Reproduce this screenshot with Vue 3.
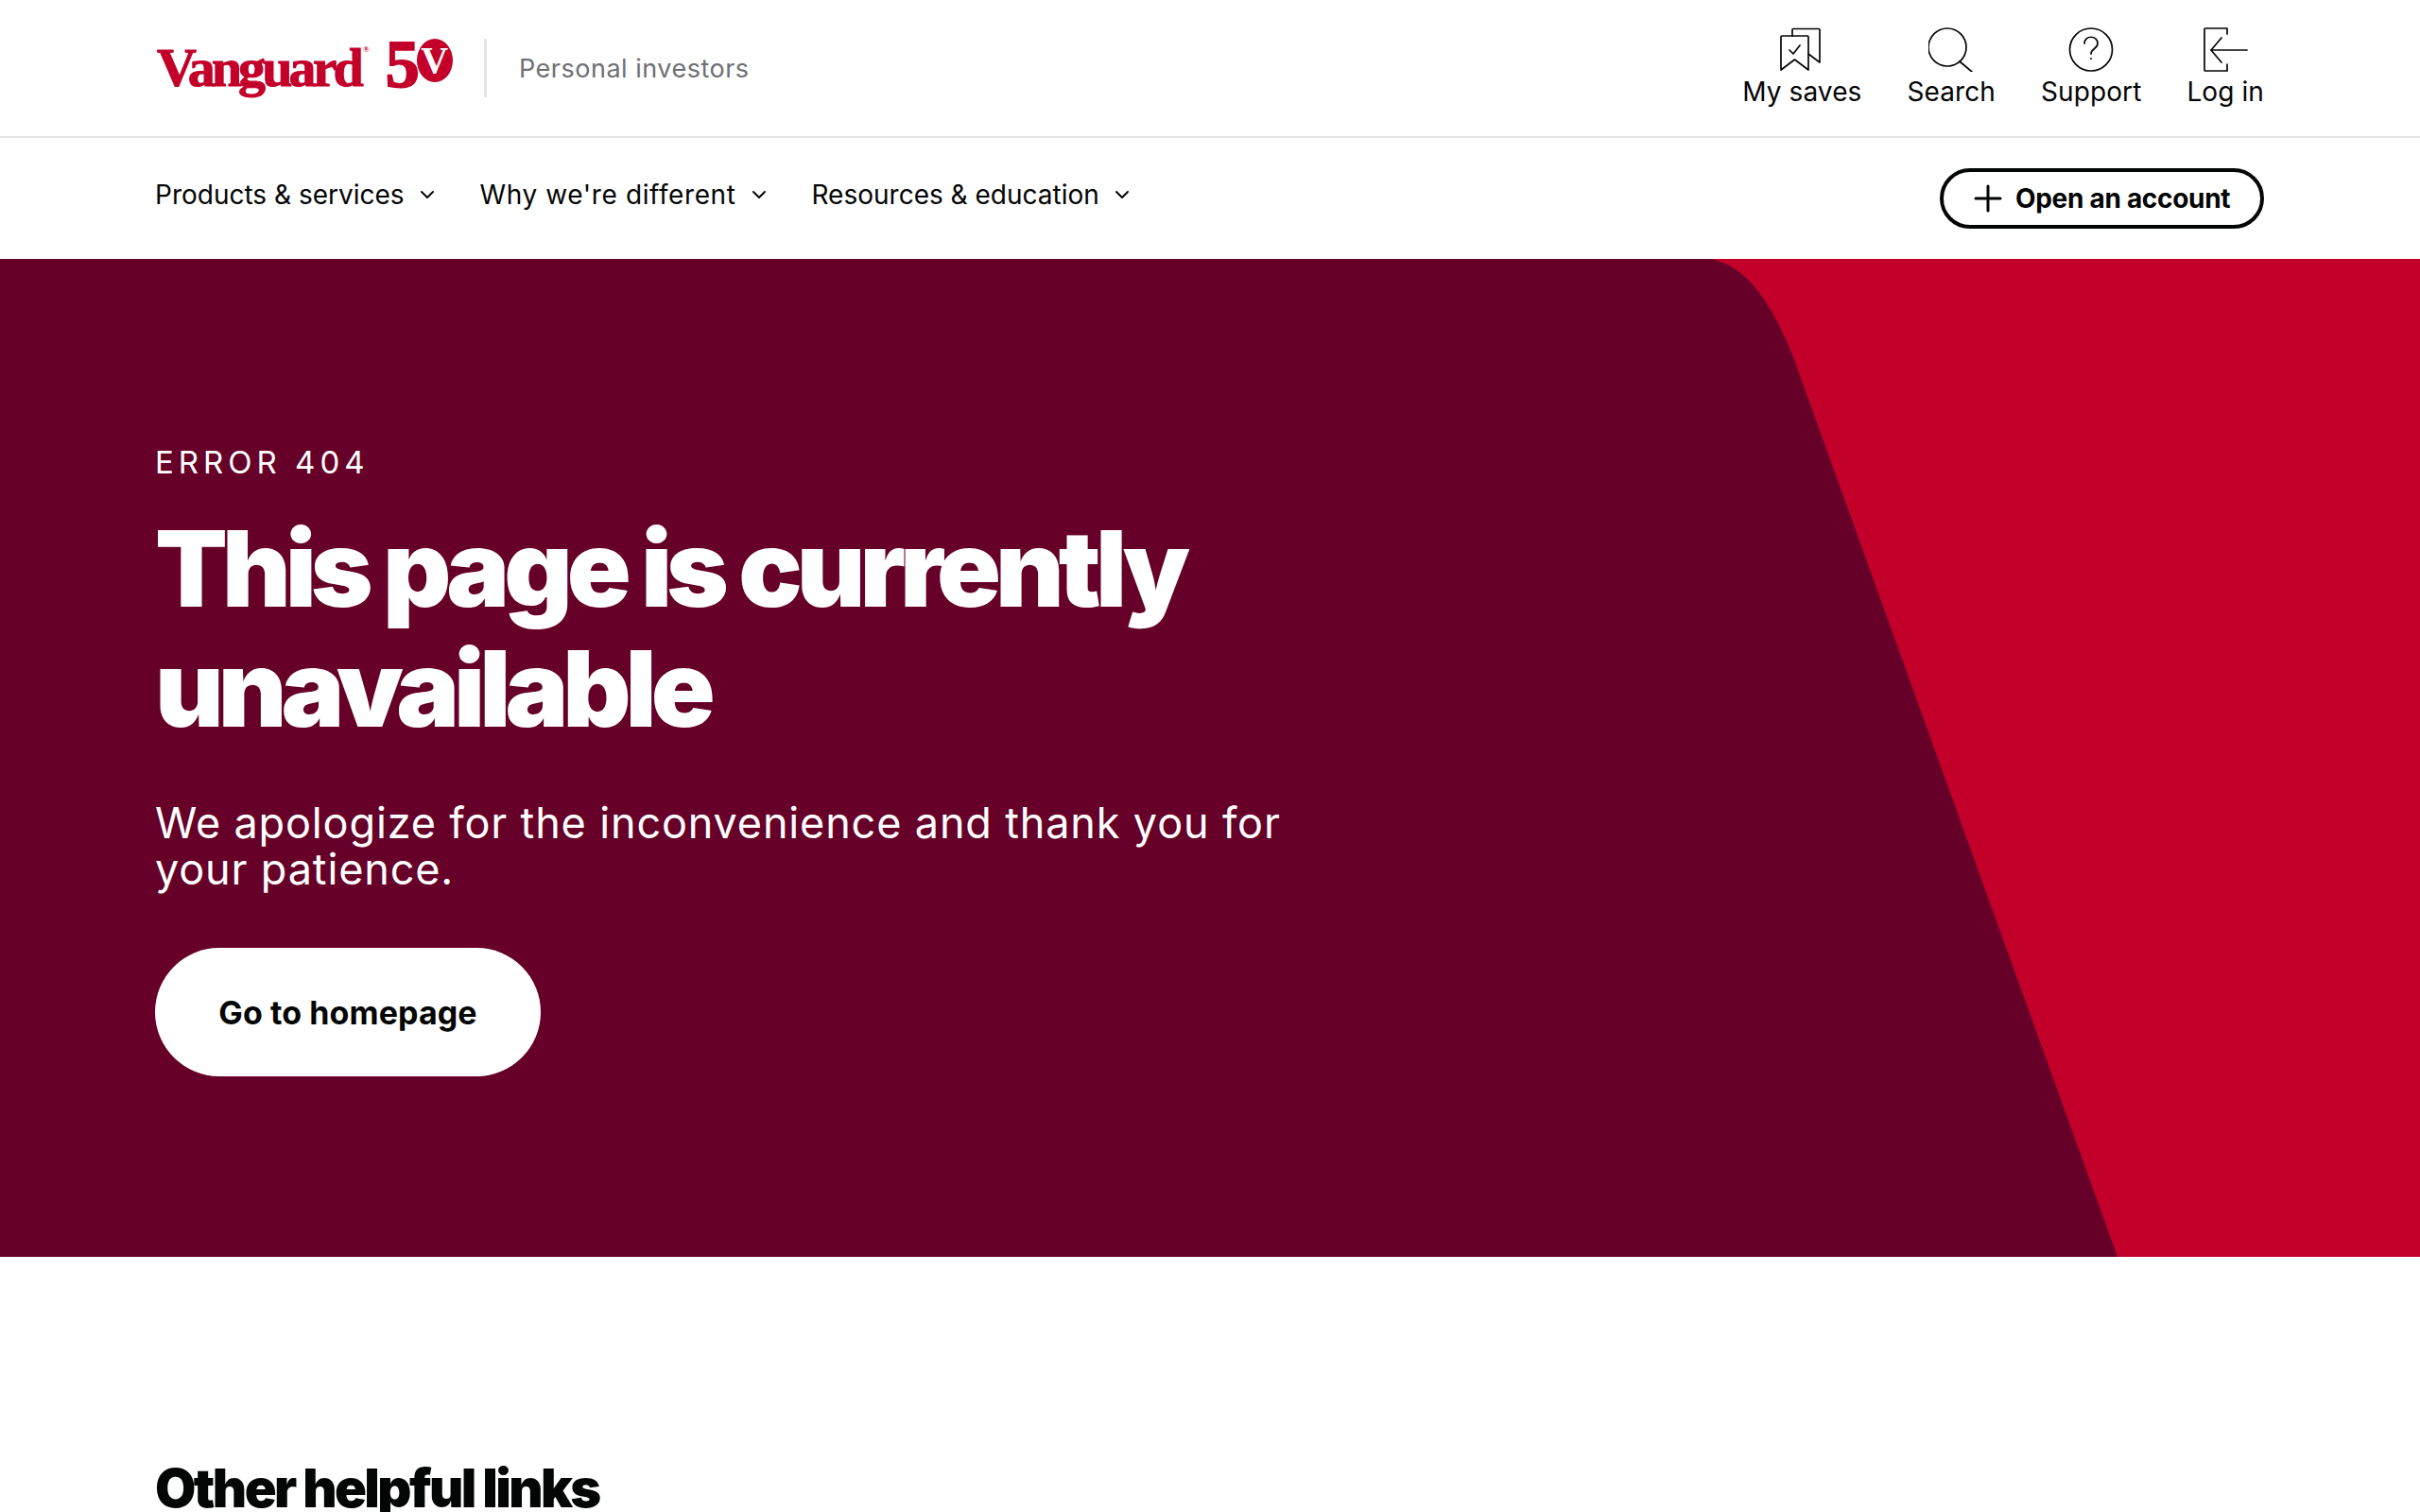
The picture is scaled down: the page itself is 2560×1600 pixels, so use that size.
<template>
  <div class="page">
    <!-- Top bar -->
    <header class="topbar">
      <div class="brand">
        <div class="logo">
          <span class="wordmark">Vanguard</span><span class="reg">®</span>
          <span class="fifty"><span class="five">5</span><span class="zero">V</span></span>
        </div>
        <span class="divider"></span>
        <span class="audience">Personal investors</span>
      </div>
      <ul class="tools">
        <li v-for="tool in tools" :key="tool.label" class="tool">
          <svg class="tool-icon" viewBox="0 0 48 48" fill="none" stroke="#040505" stroke-width="1.7" stroke-linecap="round" stroke-linejoin="round">
            <path v-for="d in tool.paths" :key="d" :d="d" />
            <circle v-if="tool.dot" cx="24" cy="34" r="1" fill="#040505" stroke="none" />
          </svg>
          <span>{{ tool.label }}</span>
        </li>
      </ul>
    </header>

    <!-- Main nav -->
    <nav class="mainnav">
      <ul class="menu">
        <li v-for="item in menu" :key="item" class="menu-item">
          {{ item }}
          <svg class="chev" viewBox="0 0 16 10" fill="none" stroke="#040505" stroke-width="2" stroke-linecap="round" stroke-linejoin="round">
            <path d="M2 2l6 6 6-6" />
          </svg>
        </li>
      </ul>
      <a class="open-btn">
        <svg class="plus" viewBox="0 0 30 30" fill="none" stroke="#040505" stroke-width="3" stroke-linecap="round">
          <path d="M15 2v26M2 15h26" />
        </svg>
        Open an account
      </a>
    </nav>

    <!-- Hero -->
    <section class="hero">
      <svg class="hero-shape" viewBox="0 0 2560 1056" preserveAspectRatio="none">
        <path d="M0 0H1810C1850 8 1875 50 1897 104L2240 1056H0Z" fill="#660028" />
      </svg>
      <div class="hero-body">
        <p class="eyebrow">ERROR 404</p>
        <h1>This page is currently unavailable</h1>
        <p class="lead">We apologize for the inconvenience and thank you for your patience.</p>
        <a class="home-btn">Go to homepage</a>
      </div>
    </section>

    <section class="links">
      <h2>Other helpful links</h2>
    </section>
  </div>
</template>

<script setup>
const tools = [
  {
    label: "My saves",
    paths: [
      "M14 10V3.5a1 1 0 0 1 1-1h27a1 1 0 0 1 1 1V38l-12-9",
      "M2 46V11a1 1 0 0 1 1-1h27a1 1 0 0 1 1 1v35l-14.500-11Z",
      "M11 25l4 4 7-9",
    ],
  },
  {
    label: "Search",
    paths: ["M20 2a20 20 0 1 0 0 40a20 20 0 1 0 0-40Z", "M33 37l13 11"],
  },
  {
    label: "Support",
    paths: [
      "M24 2a22.5 22.5 0 1 0 0 45a22.5 22.5 0 1 0 0-45Z",
      "M17 18c0-9 14-9 14 0c0 6-7 5-7 11",
    ],
    dot: true,
  },
  {
    label: "Log in",
    paths: [
      "M26 8V2H3a1 1 0 0 0-1 1v43a1 1 0 0 0 1 1h23v-7",
      "M9 25h38",
      "M20 12L9 25l11 13",
    ],
  },
];

const menu = ["Products & services", "Why we're different", "Resources & education"];
</script>

<style>
html,
body {
  margin: 0;
  background: #fff;
}
</style>

<style scoped>
.page {
  height: 1600px;
  overflow: hidden;
  font-family: Inter, "Noto Sans", sans-serif;
  color: #040505;
}

ul {
  list-style: none;
  margin: 0;
  padding: 0;
}

/* === Top bar === */
.topbar {
  height: 146px;
  box-sizing: border-box;
  border-bottom: 2px solid #e4e4e4;
  padding: 0 165px 0 166px;
  display: flex;
  align-items: center;
  justify-content: space-between;
}

.brand {
  display: flex;
  align-items: center;
}

.logo {
  display: flex;
  align-items: flex-start;
  width: 346px;
  height: 62px;
  color: #c20029;
  font-family: "Liberation Serif", serif;
  font-weight: 700;
}

.wordmark {
  font-size: 58px;
  line-height: 62px;
  letter-spacing: -3.9px;
  -webkit-text-stroke: 1px #c20029;
}

.reg {
  font-size: 9px;
  line-height: 22px;
  margin-left: 3px;
}

.fifty {
  display: flex;
  margin-left: 17px;
}

.five {
  font-size: 72px;
  line-height: 54px;
  width: 33px;
  -webkit-text-stroke: 2px #c20029;
}

.zero {
  width: 38px;
  height: 46px;
  border-radius: 50%;
  background: #c20029;
  color: #fff;
  font-size: 40px;
  line-height: 46px;
  text-align: center;
}

.divider {
  width: 3px;
  height: 62px;
  background: #e4e4e4;
}

.audience {
  margin-left: 34px;
  font-size: 27px;
  letter-spacing: 0.5px;
  color: #6e7073;
}

.tools {
  display: flex;
  gap: 48px;
  margin-top: -2px;
}

.tool {
  display: flex;
  flex-direction: column;
  align-items: center;
  gap: 4px;
  font-size: 28px;
  line-height: 34px;
  letter-spacing: 0.1px;
}

.tool-icon {
  width: 48px;
  height: 48px;
}

/* === Main nav === */
.mainnav {
  height: 128px;
  padding: 0 165px 0 164px;
  display: flex;
  align-items: center;
  justify-content: space-between;
}

.menu {
  display: flex;
  gap: 48px;
  margin-top: -8px;
}

.menu-item {
  display: flex;
  align-items: center;
  gap: 16px;
  font-size: 28px;
}

.menu-item:nth-child(2) {
  letter-spacing: 0.6px;
}

.chev {
  width: 16px;
  height: 10px;
}

.open-btn {
  display: flex;
  align-items: center;
  gap: 14px;
  box-sizing: border-box;
  width: 343px;
  height: 64px;
  padding-left: 32px;
  border: 4px solid #040505;
  border-radius: 32px;
  font-size: 28px;
  font-weight: 700;
  letter-spacing: -0.3px;
}

.plus {
  width: 30px;
  height: 30px;
}

/* === Hero === */
.hero {
  position: relative;
  height: 1056px;
  background: #c20029;
  color: #fff;
}

.hero-shape {
  position: absolute;
  inset: 0;
  width: 100%;
  height: 100%;
}

.hero-body {
  position: relative;
  padding: 193px 0 0 164px;
}

.eyebrow {
  margin: 0;
  font-size: 33px;
  line-height: 44px;
  letter-spacing: 5px;
}

h1 {
  margin: 27px 0 0;
  max-width: 1200px;
  font-size: 112px;
  line-height: 127px;
  font-weight: 900;
  letter-spacing: -6px;
}

.lead {
  margin: 54px 0 0;
  max-width: 1220px;
  font-size: 45px;
  line-height: 49px;
  letter-spacing: 0.85px;
}

.home-btn {
  margin-top: 59px;
  display: flex;
  align-items: center;
  justify-content: center;
  width: 408px;
  height: 136px;
  border-radius: 68px;
  background: #fff;
  color: #040505;
  font-size: 34px;
  font-weight: 700;
  letter-spacing: 0.1px;
}

/* === Links === */
.links {
  padding: 0 164px;
}

h2 {
  margin: 210px 0 0;
  font-size: 56px;
  line-height: 70px;
  font-weight: 900;
  letter-spacing: -2.6px;
  color: #040505;
}
</style>
